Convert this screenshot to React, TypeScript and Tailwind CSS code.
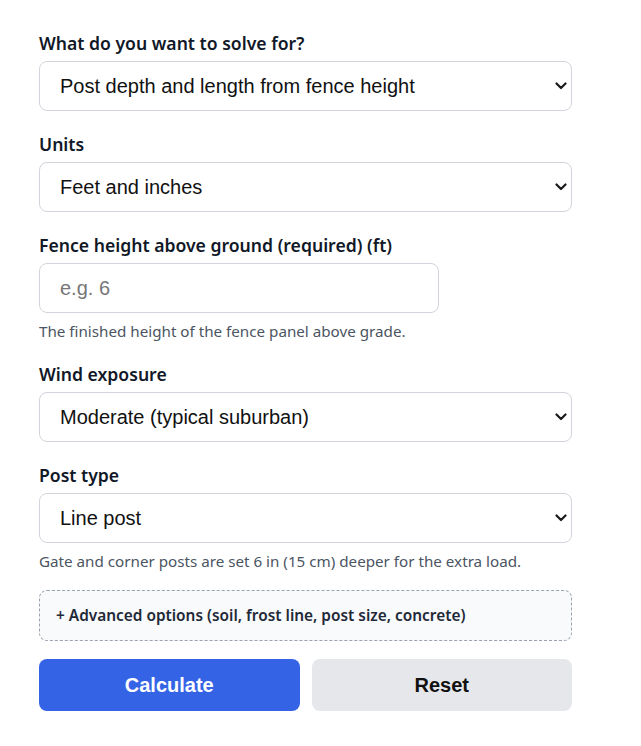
import React from 'react';

const labelCls = "block text-[17.6px] leading-6 font-semibold text-[#111827] mb-[6px]";
const hintCls = "mt-[8px] text-[15.2px] leading-5 text-[#4b5563]";

function Chevron() {
  return (
    <svg className="pointer-events-none absolute right-[5px] top-1/2 -translate-y-1/2" width="12" height="8" viewBox="0 0 12 8" fill="none">
      <path d="M1.5 1.5 L6 6 L10.5 1.5" stroke="#1a1a1a" strokeWidth="2.2" strokeLinecap="round" strokeLinejoin="round" />
    </svg>
  );
}

function SelectField({ label, value, options, hint }: { label: string; value: string; options: string[]; hint?: string }) {
  return (
    <div className="mb-[21px]">
      <label className={labelCls}>{label}</label>
      <div className="relative">
        <select
          defaultValue={value}
          className="block w-full h-[50px] appearance-none rounded-lg border border-[#d1d5db] bg-white pl-5 pr-8 text-[20px] text-[#111] outline-none"
          style={{ fontFamily: '"Liberation Sans", Arial, sans-serif' }}
        >
          {options.map((o) => (
            <option key={o}>{o}</option>
          ))}
        </select>
        <Chevron />
      </div>
      {hint && <p className={hintCls}>{hint}</p>}
    </div>
  );
}

export default function App() {
  return (
    <div className="min-h-screen bg-white" style={{ fontFamily: '"Noto Sans", "Open Sans", sans-serif' }}>
      <div className="ml-[39px] w-[533px] pt-[31px]">
        <SelectField
          label="What do you want to solve for?"
          value="Post depth and length from fence height"
          options={["Post depth and length from fence height", "Fence height from post length"]}
        />
        <SelectField label="Units" value="Feet and inches" options={["Feet and inches", "Metric (cm)"]} />

        <div className="mb-[21px]">
          <label className={labelCls}>Fence height above ground (required) (ft)</label>
          <input
            type="text"
            placeholder="e.g. 6"
            className="block w-[400px] h-[50px] rounded-lg border border-[#d1d5db] bg-white px-5 text-[20px] text-[#111] placeholder:text-[#777] outline-none"
            style={{ fontFamily: '"Liberation Sans", Arial, sans-serif' }}
          />
          <p className={hintCls}>The finished height of the fence panel above grade.</p>
        </div>

        <SelectField
          label="Wind exposure"
          value="Moderate (typical suburban)"
          options={["Sheltered", "Moderate (typical suburban)", "Exposed"]}
        />
        <SelectField
          label="Post type"
          value="Line post"
          options={["Line post", "Gate post", "Corner post"]}
          hint="Gate and corner posts are set 6 in (15 cm) deeper for the extra load."
        />

        <button className="mb-[18px] -mt-[2px] flex h-[51px] w-full items-center rounded-lg border border-dashed border-[#9ca3af] bg-[#f8fafc] px-4 text-left text-[15.4px] font-semibold text-[#1f2937]">
          + Advanced options (soil, frost line, post size, concrete)
        </button>

        <div className="grid grid-cols-2 gap-3" style={{ fontFamily: '"Liberation Sans", Arial, sans-serif' }}>
          <button className="h-[52px] rounded-lg bg-[#3563e6] text-[20px] font-bold text-white">Calculate</button>
          <button className="h-[52px] rounded-lg bg-[#e5e7eb] text-[20px] font-bold text-[#111]">Reset</button>
        </div>
      </div>
    </div>
  );
}
